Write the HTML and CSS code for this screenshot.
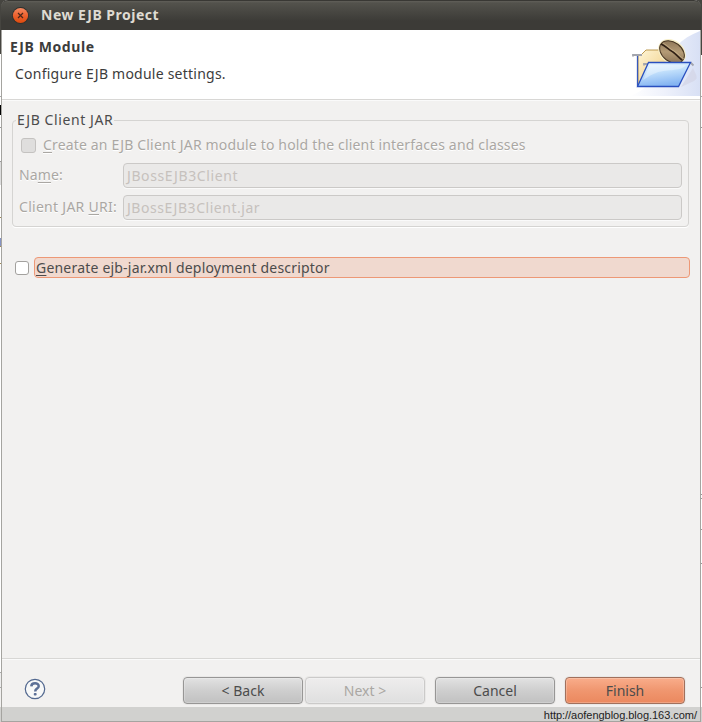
FILE: index.html
```html
<!DOCTYPE html>
<html lang="en">
<head>
<meta charset="utf-8">
<title>New EJB Project</title>
<link rel="stylesheet" href="styles.css">
</head>
<body>
<div class="edge edge-left"></div>
<main class="window">
  <header class="titlebar">
    <svg class="close" width="17" height="17" viewBox="0 0 17 17">
      <defs><linearGradient id="closeFill" x1="0" y1="0" x2="0" y2="1"><stop offset="0" stop-color="#f58a62"/><stop offset=".5" stop-color="#ee622f"/><stop offset="1" stop-color="#dc4a0d"/></linearGradient></defs>
      <circle cx="8.500" cy="8.500" r="8.400" fill="#30302c"/>
      <circle cx="8.500" cy="8.500" r="7.600" fill="url(#closeFill)"/>
      <path d="M6 6l5 5M11 6l-5 5" stroke="#4c271b" stroke-width="1.200"/>
    </svg>
    <h1 class="t-title">New EJB Project</h1>
  </header>
  <section class="banner">
    <div class="banner-text">
      <h2 class="t-module">EJB Module</h2>
      <p class="t-config">Configure EJB module settings.</p>
    </div>
    <svg class="banner-art" width="70" height="66" viewBox="0 0 70 66">
      <defs>
        <linearGradient id="sky" x1="0" y1="0" x2="1" y2="0"><stop offset="0" stop-color="#fff"/><stop offset=".5" stop-color="#eef1fb"/><stop offset="1" stop-color="#d8e0f5"/></linearGradient>
        <linearGradient id="paper" x1="0" y1="0" x2="1" y2="1"><stop offset="0" stop-color="#fff6d8"/><stop offset="1" stop-color="#edc879"/></linearGradient>
        <linearGradient id="folder" x1="0" y1="0" x2=".3" y2="1"><stop offset="0" stop-color="#edf8ff"/><stop offset=".45" stop-color="#c5e2fc"/><stop offset="1" stop-color="#85b5f2"/></linearGradient>
        <linearGradient id="bean" x1="0" y1="0" x2="1" y2="1"><stop offset="0" stop-color="#80694d"/><stop offset=".5" stop-color="#b49b76"/><stop offset="1" stop-color="#7b644b"/></linearGradient>
      </defs>
      <path d="M0 66C13 61 22 53 31 39C40 21 51 8 70 1V66Z" fill="url(#sky)"/>
      <path d="M51 57L63 38C66 45 69 48 64 51Z" fill="#d3d4e5" opacity=".7"/>
      <path d="M8 55V25H11L16 20H38V55Z" fill="url(#paper)" stroke="#bd9a50"/>
      <path d="M7.500 56V24" stroke="#3659bc" stroke-width="1.300"/>
      <path d="M3 26.500V25H12M14 35.500V34H19M60 33H61L63.500 35.500" fill="none" stroke="#a3a5ad" stroke-width="1.800"/>
      <ellipse cx="42" cy="22" rx="15" ry="11.500" transform="rotate(37 42 22)" fill="#f7efc9"/>
      <ellipse cx="42" cy="22" rx="13.600" ry="9.700" transform="rotate(37 42 22)" fill="url(#bean)" stroke="#493724" stroke-width="1"/>
      <path d="M31 14C36 16 39 20 43 22C47 25 49 28 52 30" fill="none" stroke="#302015" stroke-width="1.600"/>
      <path d="M33 13C38 16 40 19 44 21C49 24 50 27 54 29" fill="none" stroke="#ceb991" stroke-width=".7"/>
      <path d="M18.500 32.500H60.500L48.500 56.500H7.500Z" fill="url(#folder)" stroke="#294fbf" stroke-width="1.300"/>
      <path d="M20 35H56C51 42 34 39 26 43C20 45 17 48 13 50Z" fill="#fff" opacity=".35"/>
    </svg>
  </section>
  <section class="content">
    <fieldset class="group">
      <legend class="t-legend">EJB Client JAR</legend>
      <label class="option option-off"><span class="box"></span><span class="t-create"><u>C</u>reate an EJB Client JAR module to hold the client interfaces and classes</span></label>
      <div class="row"><span class="label t-name">Na<u>m</u>e:</span><div class="field"><span class="t-client">JBossEJB3Client</span></div></div>
      <div class="row"><span class="label t-uri">Client JAR <u>U</u>RI:</span><div class="field"><span class="t-jar">JBossEJB3Client.jar</span></div></div>
    </fieldset>
    <label class="option option-on"><span class="box"></span><span class="focus"><span class="t-generate"><u>G</u>enerate ejb-jar.xml deployment descriptor</span></span></label>
  </section>
  <footer class="actions">
    <svg class="help" width="22" height="22" viewBox="0 0 22 22">
      <circle cx="11" cy="11" r="9.700" fill="#f7f8f8" stroke="#52688f" stroke-width="1.200"/>
      <path d="M7.300 8.400C7.400 4.100 14.900 4.300 14.700 8.200C14.600 10.700 11.200 10.600 11.200 13.500" fill="none" stroke="#5b6f96" stroke-width="2.500"/>
      <rect x="9.800" y="15" width="2.800" height="2.600" rx=".8" fill="#5b6f96"/>
    </svg>
    <button class="btn back">&lt; Back</button>
    <button class="btn next" disabled>Next &gt;</button>
    <button class="btn cancel">Cancel</button>
    <button class="btn finish">Finish</button>
  </footer>
  <div class="address"><span>http://aofengblog.blog.163.com/</span></div>
</main>
<div class="edge edge-right"></div>
</body>
</html>
```

FILE: styles.css
```css
* { box-sizing: border-box; }
body {
  margin: 0;
  width: 702px;
  height: 722px;
  overflow: hidden;
  display: flex;
  background: linear-gradient(#464540 30px, #f2f1f0 30px);
  color: #4c4c4c;
  font: 14px/20px "Noto Sans", "Open Sans", sans-serif;
  white-space: nowrap;
}
h1, h2, p { margin: 0; font-size: 14px; }
u { text-decoration-thickness: 1px; text-underline-offset: 2px; }
.t-title { letter-spacing: .5px; margin-top: -2px; }
.t-module { letter-spacing: .6px; }
.t-config { letter-spacing: .23px; }
.t-legend { letter-spacing: .6px; }
.t-create { letter-spacing: .165px; }
.t-name { letter-spacing: .15px; }
.t-uri { letter-spacing: .28px; }
.t-client { letter-spacing: .6px; }
.t-jar { letter-spacing: .53px; }
.t-generate { letter-spacing: .2px; }
.edge { width: 1px; flex: none; }
.edge-left { background: linear-gradient(#464540 54px, #fff 54px 96px, #aaa 96px 97px, #fff 97px 105px, #000 105px 115px, #fff 115px 127px, #999 127px 128px, #fff 128px 161px, #999 161px 162px, #ddd 162px 185px, #fff 185px 217px, #a18b55 217px 218px, #fff 218px 238px, #8693c4 238px 246px, #a18b55 246px 247px, #fff 247px 263px, #a18b55 263px 264px, #fff 264px 672px, #aaa 672px 673px, #eee 673px 687px, #aaa 687px 688px, #f2f1f0 688px 707px, #d1d1cf 707px); }
.edge-right { background: linear-gradient(#464540 55px, #fff 55px 96px, #aaa 96px 97px, #fff 97px 127px, #999 127px 128px, #fff 128px 494px, #999 494px 495px, #fff 495px 498px, #999 498px 499px, #fff 499px 529px, #999 529px 530px, #fff 530px 563px, #999 563px 564px, #fff 564px 687px, #999 687px 688px, #fff 688px 707px, #d1d1cf 707px); }
.window {
  width: 700px;
  height: 722px;
  display: flex;
  flex-direction: column;
  border: solid #a5a4a0;
  border-width: 0 1px 1px;
  border-radius: 7px 7px 0 0;
  background: #f2f1f0;
}
.titlebar {
  height: 30px;
  flex: none;
  margin: 0 -1px;
  padding: 0 0 0 11px;
  display: flex;
  align-items: center;
  gap: 12px;
  border-top: 1px solid #393834;
  border-radius: 7px 7px 0 0;
  background: linear-gradient(#615f59 0, #53524c 2px, #3c3b37 20px, #3c3b37);
  color: #dfdbd2;
}
.banner {
  height: 70px;
  flex: none;
  display: flex;
  justify-content: space-between;
  background: #fff;
  border-bottom: 1px solid #d8d7d5;
}
.banner-text { padding: 7px 0 0 8px; color: #3c3c3c; }
.banner-text p { padding: 7px 0 0 5px; }
.banner-art { flex: none; }
.content { height: 558px; padding: 10px 11px 0 10px; border-top: 1px solid #fafafa; }
.group {
  height: 116px;
  margin: 0;
  padding: 6px 6px 0;
  border: 1px solid #d5d4d2;
  border-radius: 4px;
  box-shadow: 0 1px #fff;
}
.group legend { padding: 0 1px; margin-left: -3px; height: 18px; line-height: 18px; }
.option { display: flex; align-items: center; }
.option-off { height: 20px; margin: 0 0 8px 2px; gap: 7px; color: #aaa7a3; text-shadow: 0 1px #fff; }
.box { width: 14px; height: 14px; flex: none; border: 1px solid #a3a19e; border-radius: 3px; background: #fff; }
.option-off .box { width: 15px; height: 15px; border-color: #c4c2c0; background: #dfdedd; }
.row { display: flex; height: 25px; margin-bottom: 7px; color: #aaa7a3; text-shadow: 0 1px #fff; }
.label { width: 104px; line-height: 23px; }
.field { flex: 1; height: 25px; padding: 0 3px; border: 1px solid #cbc9c7; border-radius: 4px; background: #eae9e8; color: #c6c1bd; line-height: 24px; box-shadow: 0 1px #fafafa; text-shadow: none; }
.option-on { height: 21px; gap: 5px; margin: 30px -1px 0 3px; }
.focus { flex: 1; height: 21px; line-height: 20px; border: 1px solid #ed9876; border-radius: 4px; background: #f0d9cf; padding-left: 1px; }
.actions { height: 49px; flex: none; display: flex; padding: 18px 15px 0 22px; border-top: 1px solid #d8d7d5; box-shadow: inset 0 1px #fafafa; }
.help { margin: 1px 137px 0 0; flex: none; }
.btn {
  width: 120px;
  height: 27px;
  flex: none;
  padding: 0;
  border: 1px solid #979695;
  border-radius: 4px;
  background: linear-gradient(#e2e2e2, #cfcfcf 48%, #c1c1c1);
  box-shadow: inset 0 0 0 1px #ffffff38, 0 0 0 1px #e9e8e7;
  color: #4c4c4c;
  font: 14px/25px "Noto Sans", sans-serif;
}
.next { margin: 0 10px 0 2px; border-color: #cbcac9; background: linear-gradient(#eeeded, #dfdfdf); color: #aaa7a3; }
.finish { margin-left: 10px; border-color: #a1705c; background: linear-gradient(#f9ad8b, #f09770 48%, #eb885e); }
.address { height: 14px; flex: none; margin: 0 -1px; border: solid #a5a4a0; border-width: 0 1px; background: #d1d1cf; color: #222; text-align: right; padding-right: 3px; font: 11px/16px "Liberation Sans", sans-serif; }
.address span { letter-spacing: -.03px; }
```
